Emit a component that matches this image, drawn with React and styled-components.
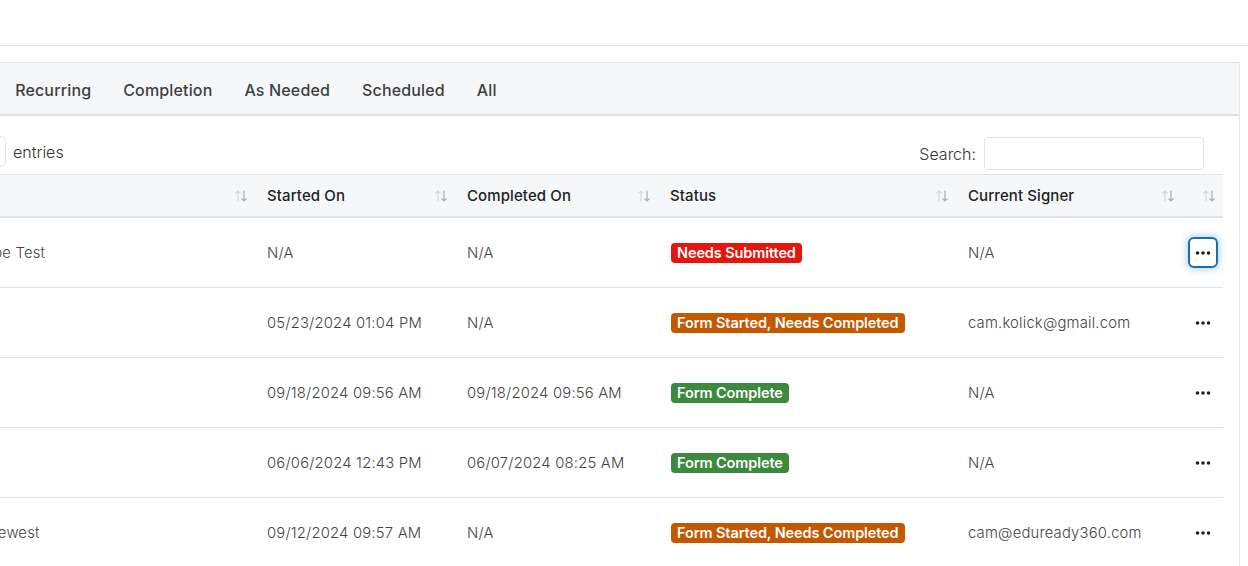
import React from "react"
import styled, { createGlobalStyle } from "styled-components"

const GlobalStyle = createGlobalStyle`
  body {
    margin: 0;
    background: #fff;
    font-family: Inter, "Noto Sans", sans-serif;
    color: #333;
    overflow: hidden;
  }
`

const tabs = ["Active", "Recurring", "Completion", "As Needed", "Scheduled", "All"]

const columns = [
  { label: "Name", width: 321 },
  { label: "Started On", width: 200 },
  { label: "Completed On", width: 203 },
  { label: "Status", width: 298 },
  { label: "Current Signer", width: 226 },
  { label: "", width: 41 },
]

const rows = [
  { name: "Envelope Test", started: "N/A", completed: "N/A", status: "submit", signer: "N/A" },
  { name: "Intake", started: "05/23/2024 01:04 PM", completed: "N/A", status: "started", signer: "cam.kolick@gmail.com" },
  { name: "Waiver", started: "09/18/2024 09:56 AM", completed: "09/18/2024 09:56 AM", status: "complete", signer: "N/A" },
  { name: "Travel", started: "06/06/2024 12:43 PM", completed: "06/07/2024 08:25 AM", status: "complete", signer: "N/A" },
  { name: "Form Newest", started: "09/12/2024 09:57 AM", completed: "N/A", status: "started", signer: "cam@eduready360.com" },
]

const statusInfo = {
  submit: { text: "Needs Submitted", color: "#e3170d" },
  started: { text: "Form Started, Needs Completed", color: "#c45800" },
  complete: { text: "Form Complete", color: "#3b8a3e" },
}

const Page = styled.div`
  width: 1248px;
  height: 566px;
  overflow: hidden;
`

const Shift = styled.div`
  margin-left: -83px;
`

const TopBar = styled.div`
  height: 45px;
  border-bottom: 1px solid #dfe4e8;
`

const TabBar = styled.nav`
  margin: 16px 8px 0 0;
  height: 49px;
  display: flex;
  align-items: center;
  padding-top: 2px;
  background: #f6f7f9;
  border: 1px solid #dde3e7;
  border-bottom: 2px solid #dbe2e6;
  border-right-color: #e2e7ea;
`

const Tab = styled.div`
  padding: 0 16px;
  font-size: 16px;
  font-weight: 500;
  color: #3d3f42;
  letter-spacing: 0.15px;
`

const Card = styled.section`
  margin-right: 8px;
  border: 1px solid #e3e8eb;
  border-top: none;
  border-radius: 0 0 4px 4px;
  padding: 21px 16px 0;
  height: 600px;
`

const Controls = styled.div`
  height: 33px;
  display: flex;
  align-items: center;
  justify-content: space-between;
  font-size: 16px;
  font-weight: 300;
  color: #333;
`

const Length = styled.label`
  display: flex;
  align-items: center;
  gap: 7px;
  margin-top: -4px;
`

const Select = styled.div`
  width: 72px;
  height: 31px;
  box-sizing: border-box;
  border: 1px solid #dfe3e7;
  border-radius: 5px;
`

const SearchBox = styled.label`
  display: flex;
  align-items: center;
  gap: 8px;
  margin-right: 19px;
`

const Input = styled.input`
  width: 220px;
  height: 33px;
  box-sizing: border-box;
  border: 1px solid #dfe3e7;
  border-radius: 4px;
  outline: none;
`

const Table = styled.table`
  margin-top: 4px;
  width: 100%;
  table-layout: fixed;
  border-collapse: collapse;
`

const Th = styled.th`
  height: 41px;
  padding: 0 7px 0 12px;
  background: #f5f7f9;
  border-top: 1px solid #dde3e7;
  border-bottom: 2px solid #dde3e7;
  text-align: left;
  font-size: 15px;
  font-weight: 500;
  letter-spacing: 0.1px;
  color: #222;
`

const HeadInner = styled.div`
  display: flex;
  align-items: center;
  justify-content: space-between;
`

const Td = styled.td`
  height: 69px;
  padding: 0 12px;
  border-bottom: 1px solid #dde3e7;
  font-size: 14.8px;
  font-weight: 300;
  letter-spacing: 0.2px;
  color: #444;
  white-space: nowrap;
  overflow: hidden;
`

const ActionCell = styled.td`
  height: 69px;
  padding: 0;
  border-bottom: 1px solid #dde3e7;
  text-align: center;
`

const Badge = styled.span`
  display: inline-block;
  margin-left: 1px;
  padding: 1px 6px;
  line-height: 18px;
  border-radius: 4px;
  font-size: 14.5px;
  font-weight: 600;
  letter-spacing: -0.1px;
  color: #fff;
  background: ${(p) => p.$color};
`

const DotsButton = styled.button`
  width: 30px;
  height: 31px;
  padding: 0;
  display: inline-flex;
  align-items: center;
  justify-content: center;
  background: #fff;
  border: 2px solid ${(p) => (p.$focused ? "#1a6eab" : "transparent")};
  border-radius: 6px;
  box-shadow: ${(p) => (p.$focused ? "0 0 6px 2px rgba(60, 150, 220, 0.35)" : "none")};
  cursor: pointer;
`

const SortIcon = () => (
  <svg width="14" height="14" viewBox="0 0 14 14" fill="none" strokeWidth="1.2" strokeLinecap="round">
    <path d="M4 12V2M1.8 4.2L4 2l2.2 2.2" stroke="#d4d8dc" />
    <path d="M10 2v10M7.8 9.8L10 12l2.2-2.2" stroke="#a9aeb3" />
  </svg>
)

const Dots = () => (
  <svg width="16" height="4" viewBox="0 0 16 4">
    <circle cx="2.5" cy="2" r="1.8" fill="#1e1f21" />
    <circle cx="8" cy="2" r="1.8" fill="#1e1f21" />
    <circle cx="13.5" cy="2" r="1.8" fill="#1e1f21" />
  </svg>
)

export default function App() {
  return (
    <Page>
      <GlobalStyle />
      <Shift>
        <TopBar />
        <TabBar>
          {tabs.map((t) => (
            <Tab key={t}>{t}</Tab>
          ))}
        </TabBar>
        <Card>
          <Controls>
            <Length>
              <Select />
              entries
            </Length>
            <SearchBox>
              Search:
              <Input type="search" />
            </SearchBox>
          </Controls>
          <Table>
            <colgroup>
              {columns.map((c, i) => (
                <col key={i} style={{ width: c.width }} />
              ))}
            </colgroup>
            <thead>
              <tr>
                {columns.map((c, i) => (
                  <Th key={i}>
                    <HeadInner>
                      <span>{c.label}</span>
                      <SortIcon />
                    </HeadInner>
                  </Th>
                ))}
              </tr>
            </thead>
            <tbody>
              {rows.map((r, i) => (
                <tr key={i}>
                  <Td>{r.name}</Td>
                  <Td>{r.started}</Td>
                  <Td>{r.completed}</Td>
                  <Td>
                    <Badge $color={statusInfo[r.status].color}>{statusInfo[r.status].text}</Badge>
                  </Td>
                  <Td>{r.signer}</Td>
                  <ActionCell>
                    <DotsButton $focused={i === 0}>
                      <Dots />
                    </DotsButton>
                  </ActionCell>
                </tr>
              ))}
            </tbody>
          </Table>
        </Card>
      </Shift>
    </Page>
  )
}
